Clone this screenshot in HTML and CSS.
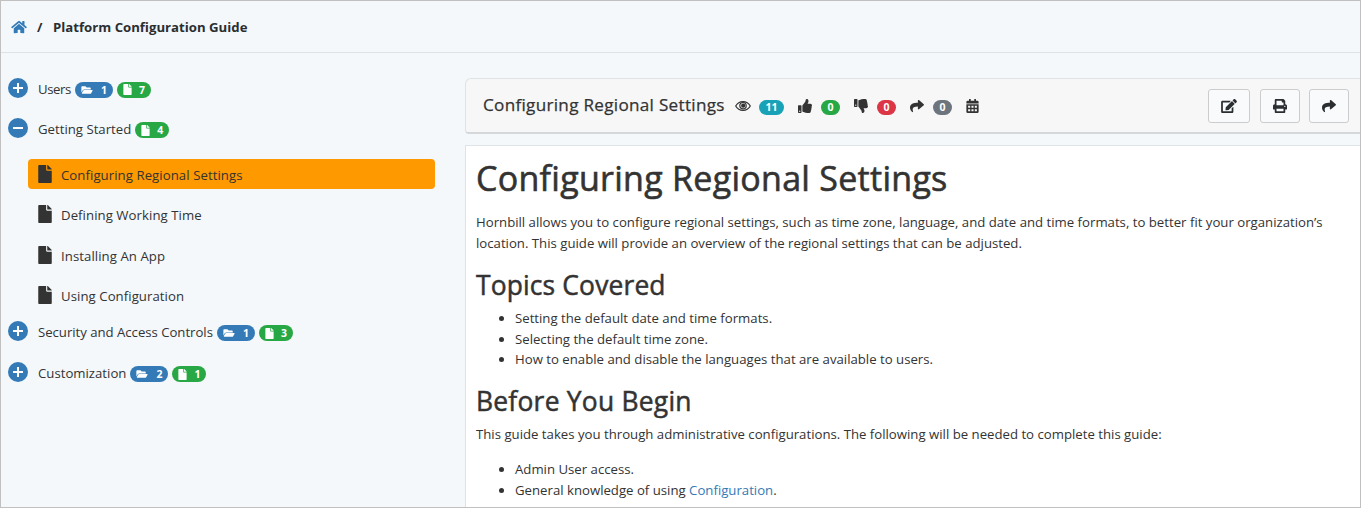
FILE: index.html
```html
<!DOCTYPE html>
<html lang="en">
<head>
<meta charset="utf-8">
<title>Platform Configuration Guide</title>
<link rel="stylesheet" href="styles.css">
</head>
<body>
<svg class="sprite" aria-hidden="true">
  <symbol id="home" viewBox="0 0 576 512"><path d="M280.37 148.26L96 300.11V464a16 16 0 0 0 16 16l112.06-.29a16 16 0 0 0 15.92-16V368a16 16 0 0 1 16-16h64a16 16 0 0 1 16 16v95.64a16 16 0 0 0 16 16.05L464 480a16 16 0 0 0 16-16V300L295.67 148.26a12.19 12.19 0 0 0-15.3 0zM571.6 251.47L488 182.56V44.05a12 12 0 0 0-12-12h-56a12 12 0 0 0-12 12v72.61L318.47 43a48 48 0 0 0-61 0L4.34 251.47a12 12 0 0 0-1.6 16.9l25.5 31A12 12 0 0 0 45.15 301l235.22-193.74a12.19 12.19 0 0 1 15.3 0L530.9 301a12 12 0 0 0 16.9-1.6l25.5-31a12 12 0 0 0-1.7-16.93z"/></symbol>
  <symbol id="file" viewBox="0 0 384 512"><path d="M224 136V0H24C10.7 0 0 10.7 0 24v464c0 13.3 10.7 24 24 24h336c13.3 0 24-10.7 24-24V160H248c-13.2 0-24-10.8-24-24zm160-14.1v6.1H256V0h6.1c6.4 0 12.5 2.5 17 7l97.9 98c4.5 4.5 7 10.6 7 16.9z"/></symbol>
  <symbol id="folder" viewBox="0 0 576 512"><path d="M572.694 292.093L500.27 416.248A63.997 63.997 0 0 1 444.989 448H45.025c-18.523 0-30.064-20.093-20.731-36.093l72.424-124.155A64 64 0 0 1 152 256h399.964c18.523 0 30.064 20.093 20.73 36.093zM152 224h328v-48c0-26.51-21.49-48-48-48H272l-64-64H48C21.49 64 0 85.49 0 112v278.046l69.077-118.418C86.214 242.25 117.989 224 152 224z"/></symbol>
  <symbol id="plus" viewBox="0 0 20 20"><circle cx="10" cy="10" r="10"/><path class="sign" d="M5 10h10M10 5v10"/></symbol>
  <symbol id="minus" viewBox="0 0 20 20"><circle cx="10" cy="10" r="10"/><path class="sign" d="M5 10h10"/></symbol>
  <symbol id="eye" viewBox="0 0 16 12"><path class="line" d="M.7 6C4 .1 12 .1 15.300 6 12 11.900 4 11.900 .7 6z"/><circle class="line" cx="8" cy="5.700" r="3.200"/><circle cx="8.200" cy="5.700" r="2.100"/></symbol>
  <symbol id="up" viewBox="0 0 512 512"><path d="M104 224H24c-13.255 0-24 10.745-24 24v240c0 13.255 10.745 24 24 24h80c13.255 0 24-10.745 24-24V248c0-13.255-10.745-24-24-24zM64 472c-13.255 0-24-10.745-24-24s10.745-24 24-24 24 10.745 24 24-10.745 24-24 24zM384 81.452c0 42.416-25.97 66.208-33.277 94.548h101.723c33.397 0 59.397 27.746 59.553 58.098.084 17.938-7.546 37.249-19.439 49.197l-.11.11c9.836 23.337 8.237 56.037-9.308 79.469 8.681 25.895-.069 57.704-16.382 74.757 4.298 17.598 2.244 32.575-6.148 44.632C440.202 511.587 389.616 512 346.839 512l-2.845-.001c-48.287-.017-87.806-17.598-119.56-31.725-15.957-7.099-36.821-15.887-52.651-16.178-6.54-.12-11.783-5.457-11.783-11.998v-213.77c0-3.2 1.282-6.271 3.558-8.521 39.614-39.144 56.648-80.587 89.117-113.111 14.804-14.832 20.188-37.236 25.393-58.902C282.515 39.293 291.817 0 312 0c24 0 72 8 72 81.452z"/></symbol>
  <symbol id="down" viewBox="0 0 512 512"><path fill-rule="evenodd" d="M24 0h80a24 24 0 0 1 24 24v240a24 24 0 0 1-24 24H24a24 24 0 0 1-24-24V24A24 24 0 0 1 24 0zM64 200a24 24 0 1 0 0 48a24 24 0 1 0 0-48z"/><path transform="matrix(1 0 0 -1 0 512)" d="M384 81.452c0 42.416-25.97 66.208-33.277 94.548h101.723c33.397 0 59.397 27.746 59.553 58.098.084 17.938-7.546 37.249-19.439 49.197l-.11.11c9.836 23.337 8.237 56.037-9.308 79.469 8.681 25.895-.069 57.704-16.382 74.757 4.298 17.598 2.244 32.575-6.148 44.632C440.202 511.587 389.616 512 346.839 512l-2.845-.001c-48.287-.017-87.806-17.598-119.56-31.725-15.957-7.099-36.821-15.887-52.651-16.178-6.54-.12-11.783-5.457-11.783-11.998v-213.77c0-3.2 1.282-6.271 3.558-8.521 39.614-39.144 56.648-80.587 89.117-113.111 14.804-14.832 20.188-37.236 25.393-58.902C282.515 39.293 291.817 0 312 0c24 0 72 8 72 81.452z"/></symbol>
  <symbol id="share" viewBox="0 0 512 512"><path d="M503.691 189.836L327.687 37.851C312.281 24.546 288 35.347 288 56.015v80.053C127.371 137.907 0 170.1 0 322.326c0 61.441 39.581 122.309 83.333 154.132 13.653 9.931 33.111-2.533 28.077-18.631C66.066 312.814 132.917 274.316 288 272.085V360c0 20.7 24.3 31.453 39.687 18.164l176.004-152c11.071-9.562 11.086-26.753 0-36.328z"/></symbol>
  <symbol id="calendar" viewBox="0 0 448 512"><path fill-rule="evenodd" d="M0 160v-48a48 48 0 0 1 48-48h48V12a12 12 0 0 1 12-12h40a12 12 0 0 1 12 12v52h128V12a12 12 0 0 1 12-12h40a12 12 0 0 1 12 12v52h48a48 48 0 0 1 48 48v48zM0 192h448v272a48 48 0 0 1-48 48H48a48 48 0 0 1-48-48zM64 244v76h76v-76zM186 244v76h76v-76zM308 244v76h76v-76zM64 372v76h76v-76zM186 372v76h76v-76zM308 372v76h76v-76z"/></symbol>
  <symbol id="edit" viewBox="0 0 576 512"><path d="M402.6 83.2l90.2 90.2c3.8 3.8 3.8 10 0 13.8L274.4 405.6l-92.8 10.3c-12.4 1.4-22.9-9.1-21.5-21.500l10.3-92.800L388.800 83.200c3.8-3.8 10-3.8 13.800 0zm162-22.900l-48.800-48.800c-15.200-15.200-39.900-15.200-55.200 0l-35.400 35.400c-3.800 3.800-3.800 10 0 13.800l90.200 90.200c3.800 3.800 10 3.800 13.800 0l35.400-35.400c15.200-15.300 15.200-40 0-55.200zM384 346.200V448H64V128h229.800c3.200 0 6.200-1.300 8.500-3.500l40-40c7.600-7.600 2.200-20.500-8.500-20.500H48C21.500 64 0 85.500 0 112v352c0 26.500 21.500 48 48 48h352c26.500 0 48-21.500 48-48V306.200c0-10.700-12.900-16-20.500-8.500l-40 40c-2.200 2.300-3.500 5.300-3.500 8.500z"/></symbol>
  <symbol id="print" viewBox="0 0 512 512"><path d="M448 192V77.250c0-8.490-3.370-16.620-9.370-22.630L393.370 9.370c-6-6-14.140-9.370-22.630-9.370H96C78.330 0 64 14.330 64 32v160c-35.350 0-64 28.650-64 64v112c0 8.840 7.160 16 16 16h48v96c0 17.670 14.330 32 32 32h320c17.670 0 32-14.330 32-32v-96h48c8.840 0 16-7.160 16-16V256c0-35.350-28.650-64-64-64zm-64 256H128v-96h256v96zm0-224H128V64h192v48c0 8.840 7.160 16 16 16h48v96zm48 72c-13.250 0-24-10.750-24-24 0-13.260 10.750-24 24-24s24 10.740 24 24c0 13.250-10.750 24-24 24z"/></symbol>
</svg>
<div class="page">
  <header class="breadcrumb">
    <svg class="home"><use href="#home"/></svg><span class="slash">/</span><span class="crumb">Platform Configuration Guide</span>
  </header>
  <div class="columns">
    <nav class="sidebar">
      <div class="group"><svg class="toggle"><use href="#plus"/></svg><span class="label tight">Users</span><span class="pill blue"><svg class="fo"><use href="#folder"/></svg>1</span><span class="pill green"><svg class="fi"><use href="#file"/></svg>7</span></div>
      <div class="group open"><svg class="toggle"><use href="#minus"/></svg><span class="label">Getting Started</span><span class="pill green"><svg class="fi"><use href="#file"/></svg>4</span></div>
      <div class="pages">
        <div class="item active"><svg class="doc"><use href="#file"/></svg><span>Configuring Regional Settings</span></div>
        <div class="item"><svg class="doc"><use href="#file"/></svg><span>Defining Working Time</span></div>
        <div class="item"><svg class="doc"><use href="#file"/></svg><span>Installing An App</span></div>
        <div class="item"><svg class="doc"><use href="#file"/></svg><span>Using Configuration</span></div>
      </div>
      <div class="group"><svg class="toggle"><use href="#plus"/></svg><span class="label snug">Security and Access Controls</span><span class="pill blue"><svg class="fo"><use href="#folder"/></svg>1</span><span class="pill green"><svg class="fi"><use href="#file"/></svg>3</span></div>
      <div class="group"><svg class="toggle"><use href="#plus"/></svg><span class="label">Customization</span><span class="pill blue"><svg class="fo"><use href="#folder"/></svg>2</span><span class="pill green"><svg class="fi"><use href="#file"/></svg>1</span></div>
    </nav>
    <main class="main">
      <div class="toolbar">
        <div class="title">Configuring Regional Settings</div>
        <div class="stats">
          <svg class="eye"><use href="#eye"/></svg><span class="count teal">11</span>
          <svg class="thumb"><use href="#up"/></svg><span class="count green">0</span>
          <svg class="thumb"><use href="#down"/></svg><span class="count red">0</span>
          <svg class="thumb"><use href="#share"/></svg><span class="count grey">0</span>
          <svg class="cal"><use href="#calendar"/></svg>
        </div>
        <div class="actions">
          <button class="btn wide"><svg class="edit"><use href="#edit"/></svg></button>
          <button class="btn"><svg><use href="#print"/></svg></button>
          <button class="btn"><svg><use href="#share"/></svg></button>
        </div>
      </div>
      <article class="article">
        <h1>Configuring Regional Settings</h1>
        <p class="intro">Hornbill allows you to configure regional settings, such as time zone, language, and date and time formats, to better fit your organization’s<br>location. This guide will provide an overview of the regional settings that can be adjusted.</p>
        <h2>Topics Covered</h2>
        <ul class="topics"><li>Setting the default date and time formats.</li><li>Selecting the default time zone.</li><li>How to enable and disable the languages that are available to users.</li></ul>
        <h2 class="before">Before You Begin</h2>
        <p class="needs">This guide takes you through administrative configurations. The following will be needed to complete this guide:</p>
        <ul><li>Admin User access.</li><li>General knowledge of using <a>Configuration</a>.</li></ul>
      </article>
    </main>
  </div>
</div>
</body>
</html>
```
FILE: styles.css
```css
* { box-sizing: border-box; }
body { margin: 0; font: 13.2px/20.5px "Open Sans", "Noto Sans", sans-serif; color: #333; }
svg { display: block; flex: none; fill: currentColor; }
.sprite { position: absolute; width: 0; height: 0; }
.page { width: 1361px; height: 508px; overflow: hidden; border: 1px solid #c0c0c0; background: #f4f8fb; display: flex; flex-direction: column; }
.breadcrumb { height: 52px; flex: none; border-bottom: 1px solid #dee2e6; display: flex; align-items: center; padding: 1px 0 0 10px; font-weight: 700; color: #2b2e31; }
.home { width: 16px; height: 14px; color: #337ab7; }
.slash { width: 26px; padding-left: 10px; }
.crumb { white-space: nowrap; }
.columns { display: flex; flex: 1; min-height: 0; }
.sidebar { width: 464px; flex: none; padding: 14px 30px 0 7px; white-space: nowrap; }
.group { height: 41px; display: flex; align-items: center; }
.group.open { height: 40px; }
.label { padding-top: 3px; }
.label.tight { letter-spacing: -0.4px; }
.label.snug { letter-spacing: -0.03px; }
.toggle { width: 20px; height: 20px; margin-right: 10px; color: #337ab7; }
.sign { stroke: #fff; stroke-width: 2; fill: none; }
.pill { width: 38px; height: 16px; border-radius: 8px; margin: 4px 0 0 4px; padding: 0 6px; color: #fff; font-size: 10.5px; font-weight: 700; line-height: 16px; display: flex; align-items: center; justify-content: space-between; }
.pill.green { width: 34px; }
.fo { width: 12px; height: 10px; }
.fi { width: 9px; height: 11px; }
.blue { background: #337ab7; }
.green { background: #28a745; }
.teal { background: #17a2b8; }
.red { background: #dc3545; }
.grey { background: #6c757d; }
.pages { padding: 11px 0 0 20px; }
.item { height: 30px; margin-bottom: 10.5px; border-radius: 4px; padding: 2px 10px 0; display: flex; align-items: center; gap: 9px; letter-spacing: .06px; }
.item:last-child { margin-bottom: 0; }
.item.active { background: #f90; }
.doc { width: 14px; height: 18px; margin-top: -3px; }
.main { flex: 1; min-width: 0; padding-top: 25px; }
.toolbar { height: 56px; border: 1px solid #dfe3e6; border-bottom: 2px solid #d5d8da; border-right: 0; border-radius: 6px 0 0 4px; background: #f7f7f7; display: flex; align-items: center; padding-left: 17px; }
.title { width: 252px; font-size: 17.1px; letter-spacing: .3px; -webkit-text-stroke: .25px; white-space: nowrap; }
.stats { flex: 1; display: flex; align-items: center; }
.eye { width: 16px; height: 12px; margin-right: 8px; }
.line { fill: none; stroke: currentColor; stroke-width: 1.2; }
.count { width: 19px; height: 15px; border-radius: 8px; color: #fff; font-size: 10.5px; line-height: 15px; font-weight: 700; text-align: center; margin: 3px 14px 0 0; }
.count.teal { width: 25px; }
.thumb { width: 14px; height: 14px; margin-right: 9px; }
.cal { width: 13px; height: 14px; }
.actions { display: flex; gap: 9.5px; padding-right: 11px; }
.btn { width: 40px; height: 34px; border: 1px solid #ccc; border-radius: 3px; background: #f8fafc; color: #2b2e31; padding: 0; display: flex; align-items: center; justify-content: center; }
.btn.wide { width: 42px; }
.btn svg { width: 14px; height: 14px; }
.btn .edit { width: 16px; }
.article { height: 380px; margin-top: 11px; border: 1px solid #dfe3e6; border-right: 0; background: #fff; padding: 11px 10px; white-space: nowrap; }
h1, h2, p, ul { margin: 0; }
h1, h2 { font-weight: 400; -webkit-text-stroke: .6px; }
h1 { font-size: 34px; line-height: 42px; letter-spacing: .28px; }
h2 { font-size: 26.4px; line-height: 34px; letter-spacing: .15px; -webkit-text-stroke-width: .5px; }
.before { letter-spacing: .25px; }
.intro { padding: 13px 0 15px; }
ul { padding-left: 39px; }
.topics { padding-bottom: 14px; margin-top: 6px; }
.needs { margin: 6px 0 15px; }
a { color: #337ab7; }
```
